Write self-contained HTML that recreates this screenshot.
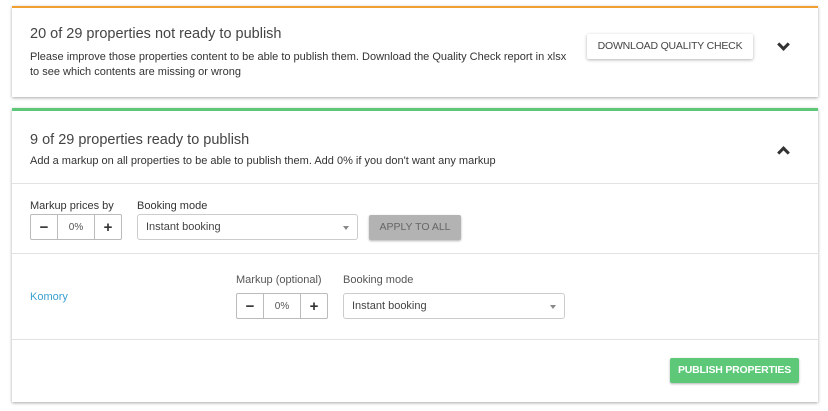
<!DOCTYPE html><html><head><style>
*{box-sizing:border-box;margin:0;padding:0}
body{width:828px;height:411px;background:#fff;font-family:"Liberation Sans",sans-serif;color:#333;position:relative;overflow:hidden}
.card{position:absolute;left:12px;width:806px;background:#fff;box-shadow:0 1px 3px rgba(0,0,0,.35)}
.abs{position:absolute}
.t{font-size:14.5px;color:#444}
.d{font-size:11px;color:#333;line-height:15px}
.hr{position:absolute;left:0;right:0;height:1px;background:#e2e2e2}
.lbl{font-size:11px;color:#333}
.step{position:absolute;height:26px;width:92px;border:1px solid #bbb;border-radius:2px;display:flex;font-size:10px}
.step div{display:flex;align-items:center;justify-content:center}
.step .b{width:26px;font-size:15px;font-weight:bold;color:#333}
.step .v{flex:1;border-left:1px solid #bbb;border-right:1px solid #bbb;color:#555}
.sel{position:absolute;height:26px;border:1px solid #ccc;border-radius:3px;font-size:11px;color:#444;padding:6px 8px}
.sel:after{content:"";position:absolute;right:8px;top:11px;border:3.5px solid transparent;border-top:4px solid #888}
.chev{position:absolute;width:9px;height:9px;border-right:3px solid #333;border-bottom:3px solid #333}
</style></head><body>
<div class="card" style="top:6px;height:91px;border-top:2px solid #f0a030">
 <div class="abs t" style="left:18px;top:18px">20 of 29 properties not ready to publish</div>
 <div class="abs d" style="left:18px;top:42px;width:560px">Please improve those properties content to be able to publish them. Download the Quality Check report in xlsx<br>to see which contents are missing or wrong</div>
 <div class="abs" style="left:575px;top:26px;width:166px;height:25px;border-radius:2px;box-shadow:0 1px 3px rgba(0,0,0,.3);font-size:10.5px;color:#444;text-align:center;line-height:25px;letter-spacing:-0.2px">DOWNLOAD QUALITY CHECK</div>
 <div class="chev" style="left:767px;top:32px;transform:rotate(45deg)"></div>
</div>
<div class="card" style="top:108px;height:294px;border-top:3px solid #5cc878">
 <div class="abs t" style="left:18px;top:21px">9 of 29 properties ready to publish</div>
 <div class="abs d" style="left:18px;top:43px">Add a markup on all properties to be able to publish them. Add 0% if you don't want any markup</div>
 <div class="chev" style="left:767px;top:37px;transform:rotate(-135deg)"></div>
 <div class="hr" style="top:72px"></div>
 <div class="abs lbl" style="left:18px;top:89px">Markup prices by</div>
 <div class="abs lbl" style="left:125px;top:89px">Booking mode</div>
 <div class="step" style="left:18px;top:103px"><div class="b">−</div><div class="v">0%</div><div class="b">+</div></div>
 <div class="sel" style="left:125px;top:103px;width:221px">Instant booking</div>
 <div class="abs" style="left:357px;top:104px;width:92px;height:25px;background:#b3b3b3;border-radius:2px;box-shadow:0 1px 2px rgba(0,0,0,.3);font-size:10.5px;color:#666;text-align:center;line-height:25px">APPLY TO ALL</div>
 <div class="hr" style="top:142px"></div>
 <div class="abs" style="left:18px;top:180px;font-size:11px;color:#3a9fd0">Komory</div>
 <div class="abs lbl" style="left:224px;top:163px;color:#555">Markup (optional)</div>
 <div class="abs lbl" style="left:331px;top:163px;color:#555">Booking mode</div>
 <div class="step" style="left:224px;top:182px"><div class="b">−</div><div class="v">0%</div><div class="b">+</div></div>
 <div class="sel" style="left:331px;top:182px;width:222px">Instant booking</div>
 <div class="hr" style="top:228px"></div>
 <div class="abs" style="left:658px;top:247px;width:129px;height:25px;background:#5cc878;border-radius:2px;box-shadow:0 1px 2px rgba(0,0,0,.3);font-size:10.5px;font-weight:bold;color:#fff;text-align:center;line-height:25px;letter-spacing:-0.2px">PUBLISH PROPERTIES</div>
</div>
</body></html>
